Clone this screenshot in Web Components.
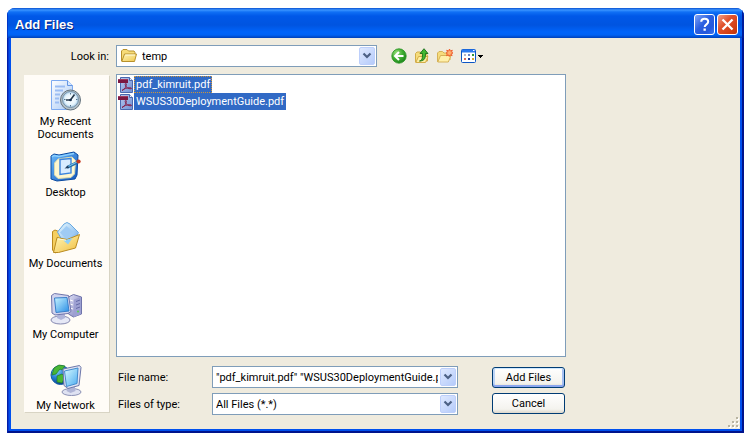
<!DOCTYPE html>
<html lang="en">
<head>
<meta charset="utf-8">
<title>Add Files</title>
<style>
  body { margin: 0; padding: 8px 7px 4px; background: #fff; color: #000; font: 11px/13px Roboto, "Liberation Sans", Arial, sans-serif; }
</style>
</head>
<body>
<xp-window heading="Add Files">
  <xp-places slot="places">
    <xp-place icon="recent">My Recent Documents</xp-place>
    <xp-place icon="desktop">Desktop</xp-place>
    <xp-place icon="documents">My Documents</xp-place>
    <xp-place icon="computer">My Computer</xp-place>
    <xp-place icon="network">My Network</xp-place>
  </xp-places>
  <xp-look-in slot="look" value="temp"></xp-look-in>
  <xp-toolbar slot="tools"></xp-toolbar>
  <xp-file-list slot="files">
    <xp-file focused>pdf_kimruit.pdf</xp-file>
    <xp-file>WSUS30DeploymentGuide.pdf</xp-file>
  </xp-file-list>
  <xp-field slot="fields" kind="text" label="File name:" value='"pdf_kimruit.pdf" "WSUS30DeploymentGuide.pdf"'></xp-field>
  <xp-field slot="fields" kind="select" label="Files of type:" value="All Files (*.*)"></xp-field>
  <xp-button slot="actions" primary>Add Files</xp-button>
  <xp-button slot="actions">Cancel</xp-button>
</xp-window>

<script>
const svg = (w, h, body) => `<svg width="${w}" height="${h}" viewBox="0 0 ${w} ${h}" aria-hidden="true">${body}</svg>`;
const grad = (id, a, b, dir = 'x2="1" y2="1"') => `<linearGradient id="${id}" x1="0" y1="0" ${dir}><stop stop-color="${a}"/><stop offset="1" stop-color="${b}"/></linearGradient>`;

const ICONS = {
  folder: svg(16, 16, `<defs>${grad('f', '#fff6b8', '#f0c850')}</defs>
    <path d="M.5 13V3L2 1.500h4L7.500 3H13l1 1.500v2" fill="#f7dc78" stroke="#b8912c"/>
    <path d="M.8 13.500 3.500 6h12l-2 7.500Z" fill="url(#f)" stroke="#b8912c"/><path d="M4.300 7h9.800" stroke="#fffbe0"/>`),
  back: svg(16, 16, `<defs><radialGradient id="g" cx=".35" cy=".3" r=".8"><stop stop-color="#9be07c"/><stop offset=".5" stop-color="#3fae31"/><stop offset="1" stop-color="#188018"/></radialGradient></defs>
    <circle cx="8" cy="8" r="7.200" fill="url(#g)" stroke="#249020" stroke-width=".8"/>
    <path d="M8 4 4 8l4 4M4.500 8H12.500" fill="none" stroke="#fff" stroke-width="2"/>`),
  up: svg(16, 16, `<path d="M1.500 14V5.500L3 4h3.500l1 1.500H12l1.500 2V13Z" fill="#f6dc7c" stroke="#d3ad48"/>
    <path d="M1.800 14.500 4.500 8.500H14l-2.500 6Z" fill="#ffeda0" stroke="#d3ad48"/>
    <path d="M5.500 13C8.500 12.500 8.500 9 8.500 5.500H6L10 .7l4 4.800h-2.500c0 4-.5 7.500-6 7.500Z" fill="#42b831" stroke="#176f17" stroke-width=".9"/>`),
  create: svg(16, 16, `<path d="M.5 14V5L2 3.500h3.500L7 5h5l1 2v5" fill="#f6dc7c" stroke="#d6b257"/>
    <path d="M.8 14 3.500 7.500H14L11.300 14Z" fill="#fff0aa" stroke="#d6b257"/>
    <path d="m12.500 1 .8 2 2-.8-.8 2 1.500.8-1.700.7.8 2-2-.8-.8 1.600-.8-1.600-2 .8.800-2L9 5l1.500-.8-.8-2 2 .8Z" fill="#ffb06e" stroke="#ef5a28" stroke-width=".9"/>`),
  view: svg(24, 16, `<rect x="1.500" y="1.500" width="14" height="13" rx="1" fill="#fff" stroke="#0b55c5"/><path d="M2 3h13" stroke="#2c7af0" stroke-width="3"/><path d="M13 2.500h1.500" stroke="#fff"/>
    <path d="M4 6h2v2H4z" fill="#b5b5c5"/><path d="M8 6h2v2H8z" fill="#6d86c8"/><path d="M12 6h2v2h-2z" fill="#319636"/><path d="M4 10h2v2H4z" fill="#d56b5d"/><path d="M8 10h2v2H8z" fill="#1f3e9c"/><path d="M12 10h2v2h-2z" fill="#d5a733"/><path d="M18 7h5v1h-1v1h-1v1h-1V9h-1V8h-1Z"/>`),
  chevron: svg(10, 8, `<path d="m1.500 1.500 3.500 3.500 3.500-3.500" fill="none" stroke="#4d6185" stroke-width="2.200"/>`),
  help: svg(19, 19, `<path d="M6.200 6.800c0-4.200 7-4.200 7 0 0 2.500-3.500 2.600-3.500 5.200" fill="none" stroke="#fff" stroke-width="2"/><path d="M8.500 13.500h2.300v2.200H8.500z" fill="#fff"/>`),
  close: svg(19, 19, `<path d="m4.500 4.500 10 10M14.500 4.500l-10 10" stroke="#fff" stroke-width="2.300"/>`),
  pdf: svg(16, 16, `<defs>${grad('p', '#b9c9ee', '#6f90d4')}</defs><path d="M2.500.5h9l3 3v12h-12Z" fill="url(#p)" stroke="#4a68ae"/><path d="M11.500.5v3h3" fill="#e6ecfa" stroke="#4967ad"/>
    <path d="M0 2h10v4H0z" fill="#7b1842"/><path d="M0 2h10v1H0z" fill="#a03b60"/><path d="M4 13.500c3-1 4.500-4.500 4.300-6.500 0-1.200-1.600-.7-1 1.200.7 2 2.700 3.800 5.700 3.600 1-.2.600-1.200-1.300-1.100-3 .1-5.600 1-7.700 2.800Z" fill="none" stroke="#86214c"/>`),
  recent: svg(32, 32, `<defs>${grad('a', '#fff', '#a6c8f5')}<radialGradient id="b"><stop stop-color="#fff"/><stop offset=".7" stop-color="#e5f4fc"/><stop offset="1" stop-color="#9fc5e5"/></radialGradient></defs>
    <path d="M1.500.5h16l5 5v24h-21Z" fill="url(#a)" stroke="#7daaf0"/><path d="M17.500.5v5h5" fill="#d6e7ff" stroke="#6696e2"/>
    <path d="M5 6.500h10M5 10.500h8M5 14.500h5M5 18.500h4M5 22.500h4" stroke="#9bbdf3" stroke-width="2"/>
    <circle cx="20.500" cy="20" r="10" fill="#b4c1c9" stroke="#66747e"/><circle cx="20.500" cy="19.500" r="8" fill="url(#b)" stroke="#7893a8"/>
    <path d="M20.500 13v1.500M20.500 25v1.500M14 19.500h1.500M26 19.500h1.500" stroke="#56748b"/><path d="m24.500 14.500-4 5.500H16" fill="none" stroke="#26394b" stroke-width="1.600"/><circle cx="20.500" cy="20" r="1.300" fill="#163153"/>`),
  desktop: svg(32, 32, `<defs>${grad('c', '#6bb9fa', '#1156bd')}</defs>
    <path d="m1 5 3-2 5 1 15-3 4 3-1 20-2 4-18 2-6-2Z" fill="url(#c)" stroke="#0b4aa0"/>
    <path d="m2 6 2-1.500 5 1 15-3" fill="none" stroke="#8bd0ff" stroke-width="1.500"/>
    <path d="M8 8 22 6l3.500 3.500-1 13.500-3.500 3.500-13 1L4.500 24V12Z" fill="#fff7cf" stroke="#d9d9b0"/>
    <path d="m10 8.500 11-1v14.500l-11 1.500Z" fill="#d9ecff" stroke="#3b84dd" stroke-width="1.400"/>
    <path d="m17 16.500 10-5" stroke="#236da8" stroke-width="3"/><path d="m18 15.600 9-4.600" stroke="#86cdf2"/><path d="m14.500 17.500 3.500-3 1 2.500Z" fill="#223b5b"/><ellipse cx="28.500" cy="10.500" rx="2.200" ry="1.900" fill="#c4381f"/>`),
  documents: svg(32, 32, `<defs>${grad('d', '#fff9bd', '#f1bd3e')}${grad('e', '#ecfbff', '#6ca9e9')}</defs>
    <path d="M2.500 28V9.500L5 8l5 2 2 3 12 1v8L5 31Z" fill="#f5cf60" stroke="#b98a20"/>
    <path d="m7.500 10 6.500-8 3-1.500 3 1.500 8.500 8.500-5 9-9 3Z" fill="url(#e)" stroke="#67a8e0"/><path d="m10 10.500 6.500-6.500 8.500 7-8 7Z" fill="#9fcbf4"/>
    <path d="m3.500 30.500 3.500-15 10 2 12.500-5-4 13.500-17 4.500Z" fill="url(#d)" stroke="#ba8b20"/><path d="m13.500 18.500 9-2.500-4.500 6.500Z" fill="#8ecff7"/><path d="m8 16.800 8 1.400" stroke="#fffbdc"/>`),
  computer: svg(32, 32, `<defs>${grad('h', '#c9f5ff', '#278ce5')}${grad('i', '#dedff5', '#7779b8')}</defs>
    <path d="m18.500 4 5-2.500L31.500 4v17l-8 3-5-3Z" fill="url(#i)" stroke="#7074aa"/><path d="m24 6.500 7-2.500v17l-7 3Z" fill="#9da0d2"/>
    <path d="m20 7 3 1m-3 3 3 1m-3 3 3 1" stroke="#fff"/><path d="m26 8.500 4-1.500m-4 5 4-1.500m-4 5 4-1.500" stroke="#656aa6"/><circle cx="28" cy="18.500" r="1" fill="#5bd44c"/>
    <ellipse cx="10.500" cy="27" rx="9.500" ry="4" fill="#e6e8f6" stroke="#8588b0"/><path d="M8 20h7v5l-4 2-4-2Z" fill="#afb4da"/>
    <path d="m1.500 2.500 3-2 14 2 2.500 16-3 2-13 1.500-3-2Z" fill="#d0d3ee" stroke="#7176ab"/><path d="m4.500 5 12.500-.5 2 13.500-13 1.500Z" fill="url(#h)" stroke="#397fca"/>`),
  network: svg(32, 32, `<defs><radialGradient id="j" cx=".3" cy=".25" r=".8"><stop stop-color="#91dcff"/><stop offset=".5" stop-color="#257fd5"/><stop offset="1" stop-color="#063a87"/></radialGradient>${grad('k', '#d9fbff', '#4babf0')}</defs>
    <circle cx="10.500" cy="11" r="9.500" fill="url(#j)" stroke="#155da6"/>
    <path d="M4 4 9 1l6 1-3 4-2-1-4 5-4 1Zm3 8 5-2 3 3-3 6-5-1Zm9-8 3 4-1 3-4-3Z" fill="#49b735" stroke="#217c24" stroke-width=".7"/>
    <ellipse cx="21.500" cy="28" rx="9.500" ry="3.500" fill="#dfe2f2" stroke="#8a90b4"/><path d="m18.500 21 6-1 1 7-5 2-4-2Z" fill="#b0b5d6"/>
    <path d="m13 5 16.500-3.500 1.500 2-2 18-11 3-4-3Z" fill="#dfe3f3" stroke="#6d77aa"/><path d="m14.500 7 13.500-3-1 15.500-10.500 3Z" fill="url(#k)" stroke="#438bce"/>`)
};

const COMBO = `
  .box { position: relative; display: flex; min-width: 0; height: 22px; box-sizing: border-box; border: 1px solid #7f9db9; background: #fff; padding: 1px; align-items: stretch; }
  input, select { appearance: none; flex: 1; min-width: 0; width: 100%; border: 0; border-radius: 0; outline: 0; margin: 0; padding: 0 2px; background: transparent; font: inherit; color: inherit; }
  .arrow { flex: none; width: 16px; display: flex; align-items: center; justify-content: center; padding: 0; border: 1px solid #bdcffb; border-radius: 2px; box-sizing: border-box; background: linear-gradient(135deg, #dfe9ff, #b5cbfa); pointer-events: none; }
  button.arrow { pointer-events: auto; }
  svg { display: block; }`;

function define(name, css, render) {
  customElements.define(name, class extends HTMLElement {
    constructor() {
      super();
      const tpl = document.createElement('template');
      tpl.innerHTML = `<style>${css}</style>${render(this)}`;
      this.attachShadow({ mode: 'open' }).append(tpl.content.cloneNode(true));
    }
  });
}

define('xp-window', `
  :host { display: flex; flex-direction: column; min-height: calc(100vh - 12px); box-sizing: border-box; border-radius: 8px 8px 0 0; overflow: hidden; background: #0148e4; }
  header { display: flex; align-items: center; gap: 2px; height: 30px; box-sizing: border-box; padding: 2px 6px 0 8px; color: #fff;
    background: linear-gradient(#0a50d0 0, #3a94ff 2px, #1070f5 4px, #0058e8 8px, #0054e0 17px, #0064fa 24px, #0062f4 27px, #0040b8 30px); box-shadow: inset 1px 0 #0036c8, inset -2px 0 #001c9c; }
  h1 { flex: 1; margin: 0; padding-top: 2px; font: bold 13px/16px "Liberation Sans", Arial, sans-serif; text-shadow: 1px 1px #06237c; }
  button { width: 21px; height: 21px; box-sizing: border-box; padding: 0; border: 1px solid #fff; border-radius: 3px; display: flex; align-items: center; justify-content: center; }
  .help { background: linear-gradient(135deg, #7fa4f6, #2b5fe0 45%, #2458dc 75%, #3c74ee); }
  .close { background: linear-gradient(135deg, #f0a088, #e0512c 40%, #cf3d12 80%, #b83410); }
  .frame { flex: 1; display: flex; padding: 0 4px 4px; background: #0050ee; box-shadow: inset 1px 0 #001ea8, inset -2px -2px #00138c, inset 2px 0 #0838d0; }
  main { position: relative; flex: 1; min-width: 0; display: grid; grid-template-columns: 85px minmax(0, 450fr) minmax(0, 167fr); grid-template-rows: 22px 1fr auto; gap: 7px; padding: 7px 0 14px 13px; background: #efebde; }
  .top { grid-column: 1 / 4; display: flex; gap: 14px; align-items: center; }
  .side { grid-row: 2 / 4; }
  .files { display: flex; min-width: 0; }
  .bottom { grid-column: 2; display: flex; justify-content: space-between; gap: 16px; padding: 2px 1px 0 2px; }
  .fields { flex: 0 1 340px; min-width: 0; display: flex; flex-direction: column; gap: 5px; }
  .actions { display: flex; flex-direction: column; gap: 5px; padding-top: 1px; }
  .grip { position: absolute; right: 1px; bottom: 1px; display: block; }
`, el => `
  <header><h1>${el.getAttribute('heading')}</h1>
    <button class="help" aria-label="Help">${ICONS.help}</button><button class="close" aria-label="Close">${ICONS.close}</button></header>
  <div class="frame"><main>
    <div class="top"><slot name="look"></slot><slot name="tools"></slot></div>
    <div class="side"><slot name="places"></slot></div>
    <div class="files"><slot name="files"></slot></div>
    <div class="bottom"><div class="fields"><slot name="fields"></slot></div><div class="actions"><slot name="actions"></slot></div></div>
    <svg class="grip" width="12" height="12" viewBox="0 0 12 12" aria-hidden="true"><path d="M10 2h2v2h-2zM6 6h2v2H6zM10 6h2v2h-2zM2 10h2v2H2zM6 10h2v2H6zM10 10h2v2h-2z" fill="#fff"/><path d="M9 1h2v2H9zM5 5h2v2H5zM9 5h2v2H9zM1 9h2v2H1zM5 9h2v2H5zM9 9h2v2H9z" fill="#b8b4a2"/></svg>
  </main></div>`);

define('xp-places', `
  :host { display: flex; flex-direction: column; margin-top: 1px; padding: 5px 2px 0 0; overflow: hidden; box-sizing: border-box; background: #fffcf7; box-shadow: 1px 1px #d8d4c4; }
`, () => `<slot></slot>`);

define('xp-place', `
  :host { display: block; min-height: 71px; }
  :host(:last-child) { min-height: 0; }
  button { width: 100%; display: flex; flex-direction: column; align-items: center; gap: 3px; padding: 0 3px; border: 0; background: none; font: inherit; color: inherit; text-align: center; }
  svg { display: block; }
`, el => `<button>${ICONS[el.getAttribute('icon')]}<span><slot></slot></span></button>`);

define('xp-look-in', `${COMBO}
  :host { display: grid; grid-template-columns: 85px 261px; gap: 7px; align-items: center; }
  label { text-align: right; }
  .box { padding-left: 4px; align-items: center; }
  .arrow { align-self: stretch; }
  select { padding: 0 5px; }
`, el => `<label for="look">Look in:</label><div class="box">${ICONS.folder}<select id="look"><option>${el.getAttribute('value')}</option></select><span class="arrow">${ICONS.chevron}</span></div>`);

define('xp-toolbar', `
  :host { display: flex; gap: 7px; }
  button { padding: 0; border: 0; background: none; display: block; }
  svg { display: block; }
`, () => [['back', 'Back'], ['up', 'Up One Level'], ['create', 'Create New Folder'], ['view', 'View Menu']]
  .map(([i, t]) => `<button aria-label="${t}">${ICONS[i]}</button>`).join(''));

define('xp-file-list', `
  :host { display: block; flex: 1; min-width: 0; box-sizing: border-box; padding: 1px; border: 1px solid #7f9db9; background: #fff; }
`, () => `<slot></slot>`);

define('xp-file', `
  :host { display: flex; align-items: center; height: 17px; color: #fff; }
  svg { flex: none; display: block; }
  span { padding: 1px 2px; line-height: 15px; background: #316ac5; white-space: nowrap; }
  :host([focused]) span { outline: 1px dotted #ce953a; outline-offset: -1px; }
`, () => `${ICONS.pdf}<span><slot></slot></span>`);

define('xp-field', `${COMBO}
  :host { display: grid; grid-template-columns: 94px minmax(0, 1fr); align-items: center; }
`, el => {
  const value = el.getAttribute('value').replace(/"/g, '&quot;');
  const control = el.getAttribute('kind') === 'text'
    ? `<input id="f" value="${value}"><button class="arrow" aria-label="Show recent names">${ICONS.chevron}</button>`
    : `<select id="f"><option>${value}</option></select><span class="arrow">${ICONS.chevron}</span>`;
  return `<label for="f">${el.getAttribute('label')}</label><div class="box">${control}</div>`;
});

define('xp-button', `
  :host { display: block; }
  button { width: 73px; height: 21px; box-sizing: border-box; padding: 0; border: 1px solid #003c74; border-radius: 3px; background: linear-gradient(#fff, #f4f3ee 80%, #dcd7cb); font: inherit; color: inherit; }
  :host([primary]) button { box-shadow: inset 0 1px #cee7ff, inset 0 -2px #8ba6ee, inset 2px 0 #bcd4f6, inset -2px 0 #a5bff2; }
`, () => `<button><slot></slot></button>`);
</script>
</body>
</html>
